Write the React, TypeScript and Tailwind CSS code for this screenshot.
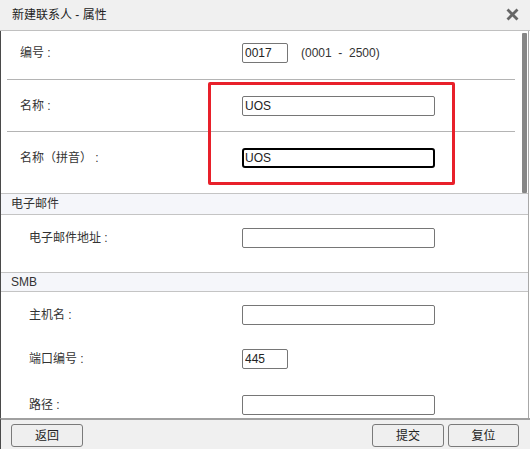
import React from 'react';

const font = "font-['Liberation_Sans','Noto_Sans_CJK_SC',sans-serif]";

const TextBox: React.FC<{ value?: string; wide?: boolean; focused?: boolean }> = ({ value = '', wide, focused }) => (
  <input
    readOnly
    value={value}
    className={`${wide ? 'w-[193px]' : 'w-[46px]'} ${
      focused ? 'h-[20px] border-2 border-black rounded-[3px] pl-[1px]' : 'h-[20px] border border-[#767676] rounded-[2px] pl-[2px]'
    } bg-white text-[12px] text-[#222] outline-none ${font}`}
  />
);

const TopRow: React.FC<{ label: string; h: string; pt: string; children: React.ReactNode; last?: boolean }> = ({
  label,
  h,
  pt,
  children,
  last,
}) => (
  <div className={`ml-[6px] mr-[13px] ${h} ${pt} ${last ? '' : 'border-b border-[#b4b4b4]'}`}>
    <div className="flex items-center">
      <div className="w-[235px] pl-[13px] text-[12px] text-[#333]">{label}</div>
      {children}
    </div>
  </div>
);

const SubRow: React.FC<{ label: string; h: string; children: React.ReactNode }> = ({ label, h, children }) => (
  <div className={`${h} pt-[13px]`}>
    <div className="flex items-center">
      <div className="w-[241px] pl-[28px] text-[12px] text-[#333]">{label}</div>
      {children}
    </div>
  </div>
);

const SectionHeader: React.FC<{ title: string; h: string }> = ({ title, h }) => (
  <div className={`${h} flex items-center border-y border-[#c4c4c4] bg-[#f5f6fa] pl-[10px] text-[12px] text-[#333]`}>
    {title}
  </div>
);

const Btn: React.FC<{ label: string; w: string }> = ({ label, w }) => (
  <button className={`${w} h-[23px] rounded-[3px] border border-[#7a7a7a] bg-[#efefef] text-[12px] text-[#222]`}>{label}</button>
);

export default function App() {
  return (
    <div className={`w-[530px] h-[449px] overflow-hidden bg-white flex flex-col ${font}`}>
      <header className="h-[31px] shrink-0 bg-[#f0f0f0] border-b border-[#c0c0c0] flex items-center justify-between pl-[12px] pr-[10px]">
        <div className="text-[12px] text-[#222]">新建联系人 - 属性</div>
        <svg width="15" height="15" viewBox="0 0 15 15" className="mt-[-2px]">
          <path d="M2.5 2.5 L12.5 12.5 M12.5 2.5 L2.5 12.5" stroke="#666666" strokeWidth="2.8" />
        </svg>
      </header>

      <div className="relative flex-1 min-h-0 overflow-hidden border-l border-[#4a4a4a] border-r border-r-[#a8a8a8] mr-[1px]">
        <TopRow label="编号 :" h="h-[49px]" pt="pt-[12px]">
          <TextBox value="0017" />
          <span className="ml-[13px] text-[12px] text-[#333]">(0001&nbsp;&nbsp;-&nbsp;&nbsp;2500)</span>
        </TopRow>
        <TopRow label="名称 :" h="h-[52px]" pt="pt-[16px]">
          <TextBox value="UOS" wide />
        </TopRow>
        <TopRow label="名称（拼音） :" h="h-[61px]" pt="pt-[16px]" last>
          <TextBox value="UOS" wide focused />
        </TopRow>

        <SectionHeader title="电子邮件" h="h-[22px]" />
        <SubRow label="电子邮件地址 :" h="h-[57px]">
          <TextBox wide />
        </SubRow>

        <SectionHeader title="SMB" h="h-[20px]" />
        <SubRow label="主机名 :" h="h-[44px]">
          <TextBox wide />
        </SubRow>
        <SubRow label="端口编号 :" h="h-[46px]">
          <TextBox value="445" />
        </SubRow>
        <SubRow label="路径 :" h="h-[46px]">
          <TextBox wide />
        </SubRow>

        {/* scrollbar thumb */}
        <div className="absolute left-[521px] top-[2px] w-[5px] h-[160px] rounded-[1px] bg-[#868686]" />
        {/* highlight box */}
        <div className="absolute left-[207px] top-[51px] w-[247px] h-[103px] border-[3px] border-[#e8202a] rounded-[2px]" />
      </div>

      <footer className="h-[31px] shrink-0 bg-[#f0f0f0] border-t-2 border-[#a0a0a0] border-l border-l-[#4a4a4a] flex items-start justify-between pt-[4px] pl-[10px] pr-[11px]">
        <Btn label="返回" w="w-[72px]" />
        <div className="flex gap-[4px]">
          <Btn label="提交" w="w-[72px]" />
          <Btn label="复位" w="w-[71px]" />
        </div>
      </footer>
    </div>
  );
}
